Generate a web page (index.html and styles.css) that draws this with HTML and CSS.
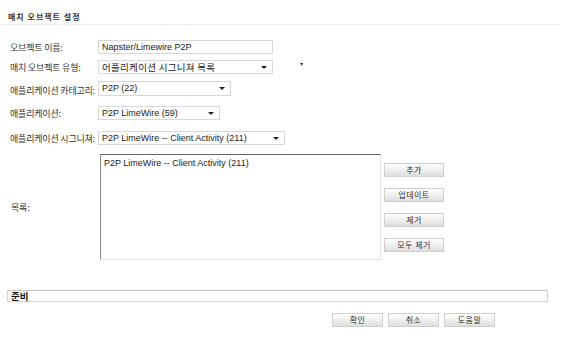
FILE: index.html
```html
<!DOCTYPE html>
<html>

<head>
    <meta charset="UTF-8">
    <title>매치 오브젝트 설정</title>
    <link rel="stylesheet" href="styles.css">
</head>

<body>
    <header class="title">매치 오브젝트 설정</header>

    <main class="form">
        <div class="row row-name">
            <label>오브젝트 이름:</label>
            <div class="field w-175">Napster/Limewire P2P</div>
        </div>
        <div class="row row-type">
            <label>매치 오브젝트 유형:</label>
            <div class="field select w-175 kr">어플리케이션 시그니쳐 목록<span class="arrow"></span></div>
            <span class="mark"></span>
        </div>
        <div class="row row-cat">
            <label>애플리케이션 카테고리:</label>
            <div class="field select w-133">P2P (22)<span class="arrow"></span></div>
        </div>
        <div class="row row-app">
            <label>애플리케이션:</label>
            <div class="field select w-122">P2P LimeWire (59)<span class="arrow"></span></div>
        </div>
        <div class="row row-sig">
            <label>애플리케이션 시그니쳐:</label>
            <div class="field select w-187">P2P LimeWire -- Client Activity (211)<span class="arrow"></span></div>
        </div>
        <div class="row row-list">
            <label>목록:</label>
            <div class="listbox">
                <div class="item">P2P LimeWire -- Client Activity (211)</div>
            </div>
            <div class="side-buttons">
                <button class="btn">추가</button>
                <button class="btn">업데이트</button>
                <button class="btn">제거</button>
                <button class="btn">모두 제거</button>
            </div>
        </div>
    </main>

    <div class="status">준비</div>

    <footer class="actions">
        <button class="btn small">확인</button>
        <button class="btn small">취소</button>
        <button class="btn small">도움말</button>
    </footer>
</body>

</html>
```

FILE: styles.css
```css
body {
    margin: 0;
    background-color: white;
    font-family: "Liberation Sans", "Noto Sans CJK KR", sans-serif;
    font-size: 9px;
    color: #222;
}

.title {
    height: 12px;
    padding: 12px 0 0 8px;
    margin-right: 16px;
    border-bottom: 1px solid #ececec;
    font-family: "Noto Sans CJK KR", sans-serif;
    font-size: 8px;
    font-weight: bold;
    letter-spacing: 1px;
    line-height: 10px;
    color: #333;
}

.form {
    margin-top: 15px;
    padding-left: 10px;
}

.row {
    display: flex;
    align-items: center;
}

.row label {
    width: 88px;
    font-family: "Noto Sans CJK KR", sans-serif;
    font-size: 9px;
    letter-spacing: -0.2px;
    color: #333;
}

.row-name {
    height: 14px;
    margin-bottom: 6px;
}

.row-type {
    height: 14px;
    margin-bottom: 7px;
}

.row-cat {
    height: 15px;
    margin-bottom: 10px;
}

.row-cat label {
    padding-top: 4px;
}

.row-app {
    height: 14px;
    margin-bottom: 11px;
}

.row-sig {
    height: 14px;
    margin-bottom: 9px;
}

.field {
    position: relative;
    box-sizing: border-box;
    height: 100%;
    padding: 0 0 0 3px;
    border: 1px solid #d8d8d8;
    line-height: 12px;
    white-space: nowrap;
    overflow: hidden;
    color: #222;
}

.kr {
    font-family: "Noto Sans CJK KR", sans-serif;
    font-size: 9.5px;
    letter-spacing: 0.3px;
}

.w-175 {
    width: 175px;
}

.w-133 {
    width: 133px;
}

.w-122 {
    width: 122px;
}

.w-187 {
    width: 187px;
}

.arrow {
    position: absolute;
    right: 5px;
    top: 5px;
    width: 0;
    height: 0;
    border-left: 3px solid transparent;
    border-right: 3px solid transparent;
    border-top: 3px solid #222;
}

.mark {
    width: 0;
    height: 0;
    margin: -5px 0 0 27px;
    border-left: 2px solid transparent;
    border-right: 1px solid transparent;
    border-top: 3px solid #333;
}

.row-list {
    align-items: flex-start;
}

.row-list label {
    align-self: center;
    padding-left: 1px;
    width: 89px;
}

.listbox {
    box-sizing: border-box;
    width: 281px;
    height: 106px;
    padding: 2px 3px;
    border-top: 1px solid #666;
    border-left: 1px solid #888;
    border-right: 1px solid #e4e4e4;
    border-bottom: 1px solid #e4e4e4;
}

.item {
    line-height: 12px;
}

.side-buttons {
    display: flex;
    flex-direction: column;
    gap: 11px;
    margin: 9px 0 0 3px;
}

.btn {
    box-sizing: border-box;
    width: 60px;
    height: 14px;
    padding: 0;
    border: 1px solid #cfcfcf;
    background: linear-gradient(#ffffff, #ececec 60%, #dedede);
    font-family: "Noto Sans CJK KR", sans-serif;
    font-size: 8px;
    letter-spacing: 0.5px;
    line-height: 12px;
    color: #333;
}

.status {
    box-sizing: border-box;
    height: 12px;
    margin: 30px 28px 0 7px;
    padding-left: 3px;
    border: 1px solid #d4d4d4;
    border-top-color: #c4c4c4;
    font-family: "Noto Sans CJK KR", sans-serif;
    font-size: 9.5px;
    font-weight: bold;
    line-height: 10px;
    color: #111;
}

.actions {
    display: flex;
    justify-content: flex-end;
    gap: 5px;
    margin: 11px 81px 0 0;
}

.btn.small {
    width: 51px;
}
```
